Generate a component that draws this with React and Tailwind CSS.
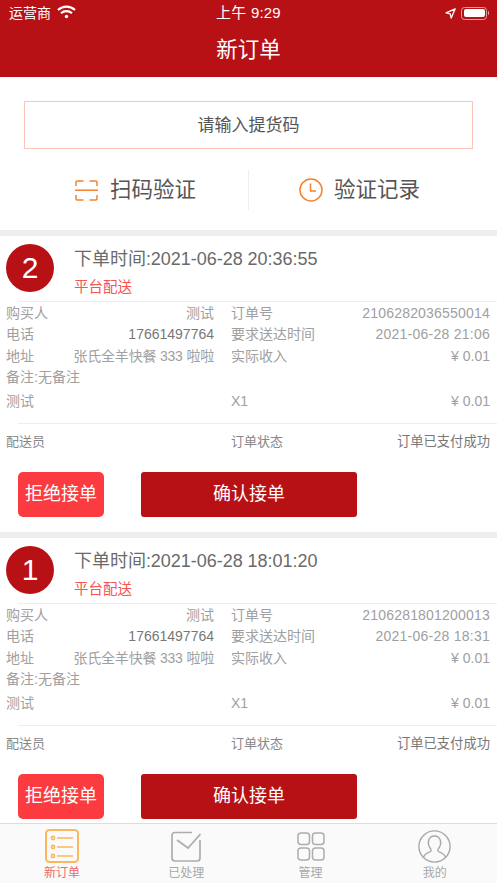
const font = { fontFamily: '"Liberation Sans", "Noto Sans CJK SC", sans-serif' };

function Row({ a, b, c, d, bClass = "text-[#a0a0a0]", dClass = "text-[#a0a0a0]", h = "h-[21.5px]" }) {
  return (
    <div className={`flex items-center pl-[6px] pr-[7px] text-[14px] leading-[18px] ${h}`}>
      <div className="w-[208px] flex justify-between">
        <span className="text-[#a0a0a0]">{a}</span>
        <span className={bClass}>{b}</span>
      </div>
      <div className="ml-[17px] flex-1 flex justify-between">
        <span className="text-[#a0a0a0]">{c}</span>
        <span className={dClass}>{d}</span>
      </div>
    </div>
  );
}

function Order({ n, time, no, due }) {
  return (
    <section className="bg-white h-[296px] shrink-0">
      <div className="h-[65px] flex pl-[6px] pt-[8px]">
        <div className="w-[48px] h-[48px] rounded-full bg-[#b71116] text-white text-[30px] leading-[48px] text-center">{n}</div>
        <div className="ml-[20px] flex flex-col">
          <div className="text-[18px] leading-[22px] text-[#6a6a6a] mt-[4px] -tracking-[0.03px]">下单时间:{time}</div>
          <div className="text-[14.5px] leading-[18px] text-[#f4554f] mt-[8px]">平台配送</div>
        </div>
      </div>
      <div className="ml-[18px] h-px bg-[#eeeeee]" />
      <div>
        <Row a="购买人" b="测试" c="订单号" d={<span className="tracking-[0.2px]">{no}</span>} />
        <Row a="电话" b="17661497764" c="要求送达时间" d={<span className="tracking-[0.25px]">{due}</span>} bClass="text-[#777777]" />
        <Row a="地址" b={<span className="-tracking-[0.2px]">张氏全羊快餐 333 啦啦</span>} c="实际收入" d="¥ 0.01" />
        <Row a="备注:无备注" b="" c="" d="" />
        <Row a="测试" b="" c="X1" d="¥ 0.01" h="h-[26px]" />
      </div>
      <div className="ml-[18px] mt-[9px] h-px bg-[#eeeeee]" />
      <div className="mt-[9px] flex justify-between items-center pl-[6px] pr-[7px] text-[13px] leading-[18px] text-[#888888]">
        <div className="w-[208px]">配送员</div>
        <div className="ml-[17px] flex-1 flex justify-between">
          <span>订单状态</span>
          <span className="text-[13.3px] text-[#777777]">订单已支付成功</span>
        </div>
      </div>
      <div className="mt-[21px] flex pl-[18px] text-white text-[18px]">
        <button className="w-[86px] h-[45px] rounded-[5px] bg-[#fb3b40]">拒绝接单</button>
        <button className="ml-[37px] w-[216px] h-[45px] rounded-[3px] bg-[#b71116]">确认接单</button>
      </div>
    </section>
  );
}

function Tab({ label, active, children }) {
  return (
    <div className="flex-1 flex flex-col items-center">
      <div className="h-[44px] flex items-center justify-center">{children}</div>
      <div className={`text-[12px] leading-[16px] -mt-[3px] ${active ? "text-[#ee6a68]" : "text-[#a8a8a8]"}`}>{label}</div>
    </div>
  );
}

export default function App() {
  return (
    <div style={font} className="w-[497px] h-[883px] overflow-hidden flex flex-col bg-[#eeeeee]">
      <header className="h-[77px] shrink-0 bg-[#b71116] text-white relative">
        <div className="h-[26px] relative flex items-center justify-between pl-[9px] pr-[8px]">
          <div className="flex items-center gap-[6px]">
            <span className="text-[14px] leading-[26px]">运营商</span>
            <svg width="19" height="14" viewBox="0 0 19 14" fill="none" stroke="white" strokeWidth="2.2" className="-mt-[2px]">
              <path d="M1 5 C6 0.5 13 0.5 18 5" />
              <path d="M4 8.2 C7 5.5 12 5.5 15 8.2" />
              <circle cx="9.5" cy="11.5" r="1.7" fill="white" stroke="none" />
            </svg>
          </div>
          <span className="absolute left-0 right-0 text-center text-[15px] leading-[26px] tracking-[0.2px]">上午 9:29</span>
          <div className="flex items-center gap-[5px]">
            <svg width="11" height="11" viewBox="0 0 11 11" fill="none" stroke="white" strokeWidth="1.3" strokeLinejoin="round"><path d="M10.2 0.8 L1 4.8 L5.2 5.8 L6.2 10 Z" /></svg>
            <div className="flex items-center">
              <div className="w-[26px] h-[13px] rounded-[3.5px] border border-[#e0a0a2] p-[1.5px]">
                <div className="w-full h-full rounded-[2px] bg-white" />
              </div>
              <div className="w-[1.5px] h-[4px] bg-[#e0a0a2] ml-[0.5px] rounded-r-sm" />
            </div>
          </div>
        </div>
        <div className="text-center text-[21.5px] leading-[50px] -mt-[1px]">新订单</div>
      </header>

      <main className="flex-1 min-h-0 overflow-hidden flex flex-col gap-[6px]">
        <section className="bg-white h-[153px] shrink-0 pt-[24px]">
          <div className="mx-[24px] h-[48px] border border-[#fcc4b8] flex items-center justify-center text-[17px] leading-[24px] pt-[1px] text-[#555]">请输入提货码</div>
          <div className="mt-[21px] h-[40px] flex">
            <div className="w-[248px] flex items-center gap-[12px] pl-[75px]">
              <svg width="23" height="21" viewBox="0 0 23 21" fill="none" stroke="#f5822b" strokeWidth="1.5">
                <path d="M1 6 V2.2 Q1 1 2.2 1 H8.5 M14.5 1 H20.8 Q22 1 22 2.2 V6 M1 15 V18.8 Q1 20 2.2 20 H8.5 M14.5 20 H20.8 Q22 20 22 18.8 V15" />
                <path d="M0 10.2 H23" />
              </svg>
              <span className="text-[21.5px] text-[#555] leading-[40px]">扫码验证</span>
            </div>
            <div className="w-px bg-[#eeeeee]" />
            <div className="flex-1 flex items-center gap-[11px] pl-[50px]">
              <svg width="24" height="24" viewBox="0 0 24 24" fill="none" stroke="#f5822b" strokeWidth="1.5">
                <circle cx="12" cy="12" r="11" />
                <path d="M11.5 5.5 V13 H17" />
              </svg>
              <span className="text-[21.5px] text-[#555] leading-[40px]">验证记录</span>
            </div>
          </div>
        </section>
        <Order n="2" time="2021-06-28 20:36:55" no="2106282036550014" due="2021-06-28 21:06" />
        <Order n="1" time="2021-06-28 18:01:20" no="2106281801200013" due="2021-06-28 18:31" />
      </main>

      <nav className="h-[60px] shrink-0 bg-[#fafafa] border-t border-[#dddddd] flex">
        <Tab label="新订单" active>
          <svg width="34" height="34" viewBox="0 0 34 34" fill="none" stroke="#fbb75e" strokeWidth="1.6">
            <rect x="1" y="1" width="32" height="32" rx="3.5" strokeWidth="2" />
            <circle cx="8" cy="9" r="1.6" /><circle cx="8" cy="18" r="1.6" /><circle cx="8" cy="27" r="1.6" />
            <path d="M12 9 H28 M12 18 H28 M12 27 H28" />
          </svg>
        </Tab>
        <Tab label="已处理">
          <svg width="30" height="31" viewBox="0 0 30 31" fill="none" stroke="#adadad" strokeWidth="1.7">
            <path d="M21 1.5 H4 Q1 1.5 1 4.5 V27 Q1 30 4 30 H26 Q29 30 29 27 V9" />
            <path d="M6 9 L17 17 L29.5 3" />
          </svg>
        </Tab>
        <Tab label="管理">
          <svg width="28" height="29" viewBox="0 0 28 29" fill="none" stroke="#adadad" strokeWidth="1.5">
            <rect x="1" y="1" width="11.5" height="11.5" rx="3" />
            <rect x="15.5" y="1" width="11.5" height="11.5" rx="3" />
            <rect x="1" y="16" width="11.5" height="12" rx="3" />
            <rect x="15.5" y="16" width="11.5" height="12" rx="3" />
          </svg>
        </Tab>
        <Tab label="我的">
          <svg width="33" height="33" viewBox="0 0 33 33" fill="none" stroke="#a8a8a8" strokeWidth="1.4">
            <circle cx="16.5" cy="16.5" r="15.6" />
            <path d="M5.5 27.5 C6.5 23.5 10 23 12.5 21.5 C13.5 20.8 13.2 19.5 12.2 18.2 C10.5 16 10 13.5 10.5 11 C11.2 7.5 13.5 6 16.5 6 C19.5 6 21.8 7.5 22.5 11 C23 13.5 22.5 16 20.8 18.2 C19.8 19.5 19.5 20.8 20.5 21.5 C23 23 26.5 23.5 27.5 27.5" />
          </svg>
        </Tab>
      </nav>
    </div>
  );
}
